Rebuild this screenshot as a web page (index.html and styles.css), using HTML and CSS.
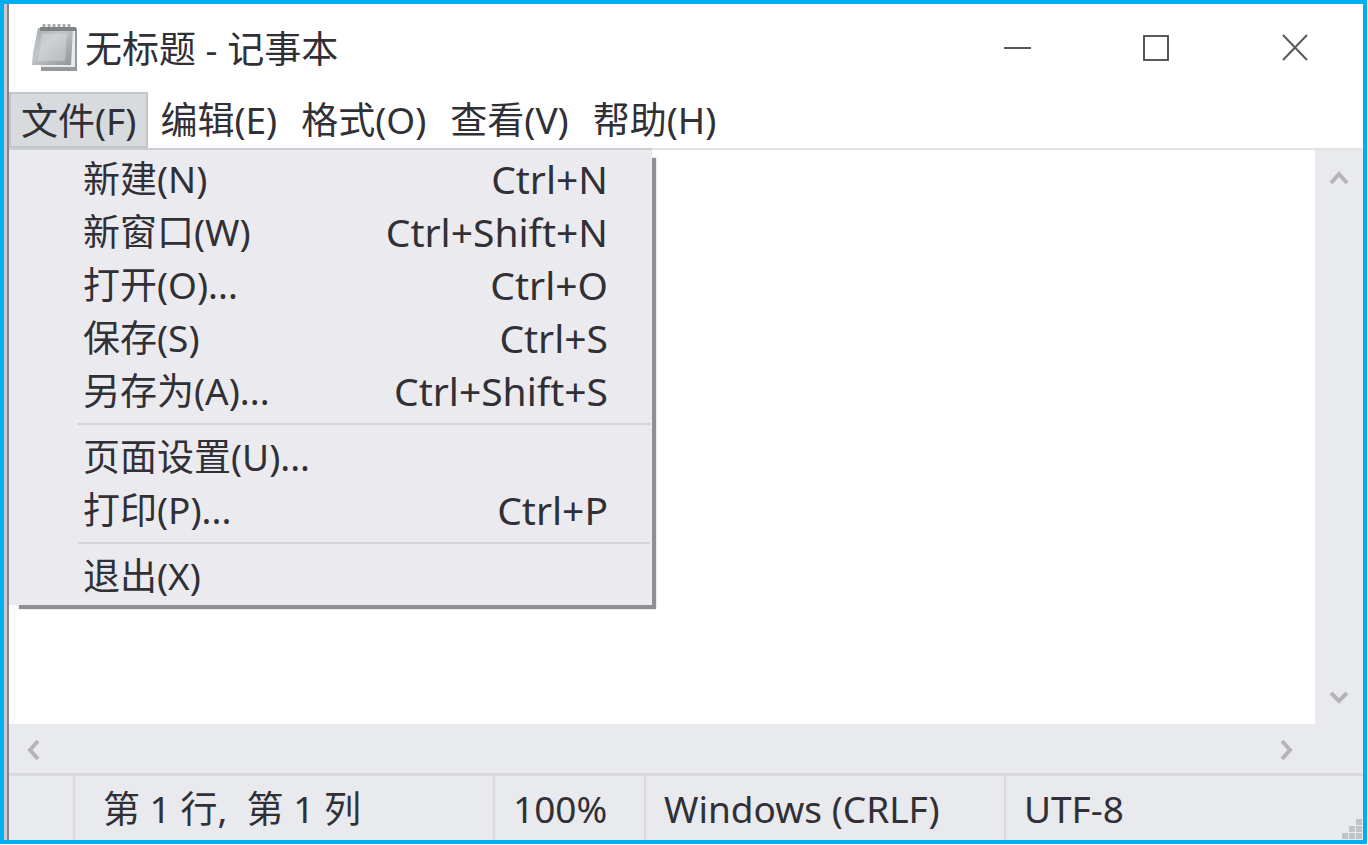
FILE: index.html
```html
<!DOCTYPE html>
<html lang="zh-CN">
<head>
  <meta charset="UTF-8">
  <meta name="viewport" content="width=device-width, initial-scale=1.0">
  <title>无标题 - 记事本</title>
  <link rel="stylesheet" href="styles.css">
</head>
<body>

<div class="window">
  <header class="title-bar">
    <svg class="app-icon" width="50" height="52" viewBox="0 0 50 52">
      <defs>
        <linearGradient id="cover" x1="0" y1="0" x2="1" y2="1">
          <stop offset="0" stop-color="#a3a8ab"/>
          <stop offset="0.4" stop-color="#c2c7c9"/>
          <stop offset="1" stop-color="#8e9396"/>
        </linearGradient>
      </defs>
      <path d="M13 6h34v43H11v-6z" fill="#96999b"/>
      <path d="M40 8h5v37H11v-2h27z" fill="#e9ecee"/>
      <path d="M8 6h35l-2 37H2l1-12z" fill="url(#cover)"/>
      <path d="M12 12h25l-2 27H8z" fill="#d9dee0" opacity="0.45"/>
      <path d="M10 7h36" stroke="#808386" stroke-width="4"/>
      <path d="M14 2v3M19 2v3M24 2v3M29 2v3M34 2v3M39 2v3" stroke="#a9acae" stroke-width="3"/>
    </svg>
    <h1 class="title">无标题 - 记事本</h1>
    <div class="controls">
      <button class="control" aria-label="最小化">
        <svg width="30" height="30" viewBox="0 0 30 30"><path d="M3 15h27"/></svg>
      </button>
      <button class="control" aria-label="最大化">
        <svg width="30" height="30" viewBox="0 0 30 30"><path d="M4 3h24v24H4z"/></svg>
      </button>
      <button class="control" aria-label="关闭">
        <svg width="30" height="30" viewBox="0 0 30 30"><path d="M4 2l24 25M28 2L4 27"/></svg>
      </button>
    </div>
  </header>

  <nav class="menu-bar">
    <div class="menu">
      <button class="menu-title active">文件(F)</button>
      <div class="dropdown">
        <button class="item"><span>新建(N)</span><span class="shortcut">Ctrl+N</span></button>
        <button class="item"><span>新窗口(W)</span><span class="shortcut">Ctrl+Shift+N</span></button>
        <button class="item"><span>打开(O)...</span><span class="shortcut">Ctrl+O</span></button>
        <button class="item"><span>保存(S)</span><span class="shortcut">Ctrl+S</span></button>
        <button class="item"><span>另存为(A)...</span><span class="shortcut">Ctrl+Shift+S</span></button>
        <hr class="separator">
        <button class="item"><span>页面设置(U)...</span></button>
        <button class="item"><span>打印(P)...</span><span class="shortcut">Ctrl+P</span></button>
        <hr class="separator">
        <button class="item"><span>退出(X)</span></button>
      </div>
    </div>
    <button class="menu-title">编辑(E)</button>
    <button class="menu-title">格式(O)</button>
    <button class="menu-title">查看(V)</button>
    <button class="menu-title">帮助(H)</button>
  </nav>

  <main class="editor">
    <textarea class="text" aria-label="文本编辑器"></textarea>
    <div class="scroll-y">
      <button class="arrow" aria-label="向上滚动">
        <svg width="24" height="24" viewBox="0 0 24 24"><path d="M4 17l8-9 8 9"/></svg>
      </button>
      <button class="arrow" aria-label="向下滚动">
        <svg width="24" height="24" viewBox="0 0 24 24"><path d="M4 9l8 8 8-8"/></svg>
      </button>
    </div>
  </main>
  <div class="scroll-x">
    <button class="arrow" aria-label="向左滚动">
      <svg width="24" height="24" viewBox="0 0 24 24"><path d="M17 4l-8 9 8 9"/></svg>
    </button>
    <button class="arrow" aria-label="向右滚动">
      <svg width="24" height="24" viewBox="0 0 24 24"><path d="M7 4l8 9-8 9"/></svg>
    </button>
  </div>

  <footer class="status-bar">
    <div class="status empty"></div>
    <div class="status position">第 1 行,&nbsp; 第 1 列</div>
    <div class="status zoom">100%</div>
    <div class="status line-ending">Windows (CRLF)</div>
    <div class="status encoding">UTF-8</div>
    <svg class="grip" width="22" height="22" viewBox="0 0 22 22">
      <path d="M15 1h6v6h-6zM8 8h6v6H8zM15 8h6v6h-6zM1 15h6v6H1zM8 15h6v6H8zM15 15h6v6h-6z"/>
    </svg>
  </footer>
</div>

</body>
</html>
```
FILE: styles.css
```css
* {
  box-sizing: border-box;
}

body {
  margin: 0;
  padding: 0 1px 1px 0;
  height: 100vh;
  background: #fff;
  color: #303036;
  font-family: 'Noto Sans', 'Noto Sans CJK SC', sans-serif;
  font-size: 37px;
  line-height: 53px;
}

button {
  margin: 0;
  padding: 0;
  border: 0;
  background: none;
  color: inherit;
  font: inherit;
  white-space: nowrap;
}

svg {
  display: block;
}

.window {
  display: flex;
  flex-direction: column;
  height: 100%;
  border: 4px solid #00aeef;
  background: linear-gradient(to right, #c9cbd0 3px, #85868c 3px, #85868c 5px, #fff 5px);
  padding-left: 5px;
}

/* title bar */
.title-bar {
  display: flex;
  align-items: center;
  height: 88px;
  padding-left: 21px;
}

.title {
  flex: 1;
  margin: 0 0 0 5px;
  font-size: 37px;
  font-weight: normal;
}

.controls {
  display: flex;
}

.control {
  display: flex;
  align-items: center;
  justify-content: center;
  width: 139px;
  height: 88px;
}

.control svg {
  fill: none;
  stroke: #59595c;
  stroke-width: 2;
}

/* menu bar */
.menu-bar {
  display: flex;
  height: 58px;
  border-bottom: 2px solid #e4e4e7;
}

.menu {
  position: relative;
}

.menu-title {
  height: 56px;
  padding: 0 12px 2px;
}

.menu-title.active {
  border: 2px solid #c3c6c9;
  background: #d8dbde;
  padding: 0 10px 2px;
}

.dropdown {
  position: absolute;
  z-index: 1;
  top: 56px;
  left: 0;
  width: 643px;
  padding: 2px 2px 3px 0;
  border-top: 2px solid #cdcdd2;
  background: #ebebef;
  box-shadow: 7px 7px 1px -3px #8f9093;
}

.item {
  display: flex;
  justify-content: space-between;
  width: 100%;
  padding: 0 42px 0 74px;
}

.shortcut {
  font-size: 39px;
}

.separator {
  margin: 6px 0 5px 69px;
  border: 0;
  border-top: 2px solid #d3d3d8;
}

/* text area and scroll bars */
.editor {
  display: flex;
  flex: 1;
}

.text {
  flex: 1;
  border: 0;
  outline: 0;
  padding: 8px;
  resize: none;
  font: inherit;
}

.scroll-y {
  display: flex;
  flex-direction: column;
  justify-content: space-between;
  align-items: center;
  width: 48px;
  padding: 16px 0;
  background: #e9eaed;
}

.scroll-x {
  display: flex;
  justify-content: space-between;
  align-items: center;
  height: 49px;
  padding: 0 64px 0 12px;
  background: #e9eaed;
}

.arrow svg {
  fill: none;
  stroke: #b4b5b8;
  stroke-width: 4;
}

/* status bar */
.status-bar {
  display: flex;
  height: 67px;
  border-top: 3px solid #d9d9de;
  background: #e9eaed;
}

.status {
  padding: 6px 0 0 18px;
  border-right: 2px solid #d9d9de;
  white-space: nowrap;
}

.empty {
  width: 66px;
}

.position {
  width: 420px;
  padding-left: 28px;
}

.zoom {
  width: 151px;
}

.line-ending {
  width: 360px;
}

.encoding {
  flex: 1;
  border-right: 0;
}

.grip {
  align-self: flex-end;
  fill: #c2c3c5;
}
```
